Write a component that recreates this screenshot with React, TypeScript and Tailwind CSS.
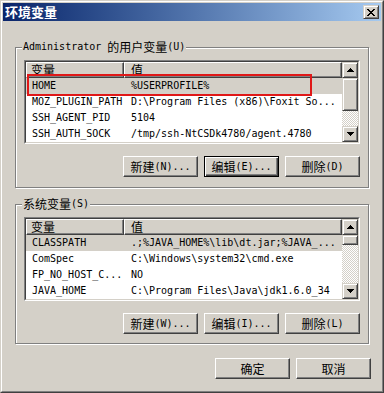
import React from 'react';

const CJK = /[\u3000-\u9fff\uff00-\uffef]/;

// splits mixed text: CJK in a CJK face, ASCII in a narrow mono (SimSun-like widths)
const Txt: React.FC<{ s: string }> = ({ s }) => {
  const parts = s.match(/[\u3000-\u9fff\uff00-\uffef]+|[^\u3000-\u9fff\uff00-\uffef]+/g) ?? [];
  return (
    <>
      {parts.map((p, i) =>
        CJK.test(p) ? (
          <span key={i} className="font-['Noto_Sans_CJK_SC',sans-serif] text-[12px] leading-[14px]">
            {p}
          </span>
        ) : (
          <span key={i} className="font-['DejaVu_Sans_Mono',monospace] text-[10px] leading-[14px] whitespace-pre">
            {p}
          </span>
        )
      )}
    </>
  );
};

const Pixels: React.FC<{ rows: string[] }> = ({ rows }) => (
  <svg width={rows[0].length} height={rows.length} shapeRendering="crispEdges">
    {rows.flatMap((r, y) =>
      r.split('').map((c, x) =>
        c === '#' ? <rect key={`${x}-${y}`} x={x} y={y} width={1} height={1} fill="#000" /> : null
      )
    )}
  </svg>
);

const closeGlyph = ['##....##', '.##..##.', '..####..', '...##...', '..####..', '.##..##.', '##....##'];
const upGlyph = ['...#...', '..###..', '.#####.', '#######'];
const downGlyph = ['#######', '.#####.', '..###..', '...#...'];

const raisedSmall =
  'border border-t-[#d4d0c8] border-l-[#d4d0c8] border-r-[#404040] border-b-[#404040] shadow-[inset_1px_1px_0_#ffffff,inset_-1px_-1px_0_#808080] bg-[#d4d0c8]';
const pushBtn =
  'border border-t-white border-l-white border-r-[#404040] border-b-[#404040] shadow-[inset_-1px_-1px_0_#808080] bg-[#d4d0c8]';
const defaultBtn =
  'border border-black shadow-[inset_1px_1px_0_#ffffff,inset_-1px_-1px_0_#404040,inset_-2px_-2px_0_#808080] bg-[#d4d0c8]';

const Button: React.FC<{ label: string; isDefault?: boolean; w?: string }> = ({ label, isDefault }) => (
  <div className={`w-[75px] h-[21px] flex items-center justify-center text-black ${isDefault ? defaultBtn : pushBtn}`}>
    <Txt s={label} />
  </div>
);

const ScrollBar: React.FC<{ thumb: string }> = ({ thumb }) => (
  <div className="w-[16px] flex flex-col shrink-0">
    <div className={`h-[16px] flex items-center justify-center ${raisedSmall}`}>
      <Pixels rows={upGlyph} />
    </div>
    <div className={`${thumb} ${raisedSmall}`} />
    <div className="flex-1 bg-[repeating-conic-gradient(#d4d0c8_0%_25%,#ffffff_0%_50%)] [background-size:2px_2px]" />
    <div className={`h-[16px] flex items-center justify-center ${raisedSmall}`}>
      <Pixels rows={downGlyph} />
    </div>
  </div>
);

const headerCell =
  'h-[16px] flex items-center bg-[#d4d0c8] border border-t-white border-l-white border-r-[#404040] border-b-[#404040] shadow-[inset_-1px_-1px_0_#808080]';

const ListView: React.FC<{ rows: [string, string][]; thumb: string; marked?: boolean }> = ({
  rows,
  thumb,
  marked,
}) => (
  <div className="relative h-[84px] border border-t-[#808080] border-l-[#808080] border-r-white border-b-white">
    <div className="h-full flex bg-white border border-t-[#404040] border-l-[#404040] border-r-[#d4d0c8] border-b-[#d4d0c8]">
      <div className="flex-1 min-w-0 flex flex-col overflow-hidden">
        <div className="flex">
          <div className={`${headerCell} w-[98px] pl-[4px]`}>
            <Txt s="变量" />
          </div>
          <div className={`${headerCell} flex-1 pl-[6px]`}>
            <Txt s="值" />
          </div>
        </div>
        {rows.map(([k, v], i) => (
          <div key={k} className={`h-[16px] flex items-center text-black ${i === 0 ? 'bg-[#d4d0c8]' : ''}`}>
            <div className="w-[98px] pl-[6px] shrink-0 flex items-center">
              <Txt s={k} />
            </div>
            <div className="pl-[7px] flex items-center whitespace-nowrap">
              <Txt s={v} />
            </div>
          </div>
        ))}
      </div>
      <ScrollBar thumb={thumb} />
    </div>
    {marked && (
      <div className="absolute left-[2px] top-[13px] w-[285px] h-[22px] border-2 border-[#e01818] pointer-events-none" />
    )}
  </div>
);

const Group: React.FC<{ label: string; className: string; children: React.ReactNode }> = ({
  label,
  className,
  children,
}) => (
  <div
    className={`relative mx-[12px] px-[8px] pt-[12px] border border-[#808080] shadow-[inset_1px_1px_0_#ffffff,1px_1px_0_#ffffff] ${className}`}
  >
    <span className="absolute -top-[8px] left-[6px] h-[14px] px-[1px] flex items-center bg-[#d4d0c8] text-black">
      <Txt s={label} />
    </span>
    {children}
  </div>
);

const userVars: [string, string][] = [
  ['HOME', '%USERPROFILE%'],
  ['MOZ_PLUGIN_PATH', 'D:\\Program Files (x86)\\Foxit So...'],
  ['SSH_AGENT_PID', '5104'],
  ['SSH_AUTH_SOCK', '/tmp/ssh-NtCSDk4780/agent.4780'],
];

const sysVars: [string, string][] = [
  ['CLASSPATH', '.;%JAVA_HOME%\\lib\\dt.jar;%JAVA_...'],
  ['ComSpec', 'C:\\Windows\\system32\\cmd.exe'],
  ['FP_NO_HOST_C...', 'NO'],
  ['JAVA_HOME', 'C:\\Program Files\\Java\\jdk1.6.0_34'],
];

export default function App() {
  return (
    <div className="w-[384px] h-[393px] bg-[#d4d0c8] border border-t-[#d4d0c8] border-l-[#d4d0c8] border-r-[#404040] border-b-[#404040] overflow-hidden">
      <div className="h-full flex flex-col p-[1px] border border-t-white border-l-white border-r-[#808080] border-b-[#808080]">
        {/* title bar */}
        <div className="h-[18px] shrink-0 flex items-center justify-between bg-gradient-to-r from-[#0a246a] to-[#a6caf0] pl-[2px] pr-[2px]">
          <span className="font-['Noto_Sans_CJK_SC',sans-serif] text-[13px] font-bold leading-[18px] text-white">
            环境变量
          </span>
          <div className={`w-[16px] h-[14px] flex items-center justify-center ${raisedSmall}`}>
            <Pixels rows={closeGlyph} />
          </div>
        </div>

        <Group label="Administrator 的用户变量(U)" className="mt-[26px] pb-[10px]">
          <ListView rows={userVars} thumb="h-[33px]" marked />
          <div className="mt-[12px] flex justify-end gap-[6px]">
            <Button label="新建(N)..." />
            <Button label="编辑(E)..." isDefault />
            <Button label="删除(D)" />
          </div>
        </Group>

        <Group label="系统变量(S)" className="mt-[16px] pb-[9px]">
          <ListView rows={sysVars} thumb="h-[10px]" />
          <div className="mt-[12px] flex justify-end gap-[6px]">
            <Button label="新建(W)..." />
            <Button label="编辑(I)..." />
            <Button label="删除(L)" />
          </div>
        </Group>

        <div className="mt-[14px] pr-[10px] flex justify-end gap-[6px]">
          <Button label="确定" />
          <Button label="取消" />
        </div>
      </div>
    </div>
  );
}
